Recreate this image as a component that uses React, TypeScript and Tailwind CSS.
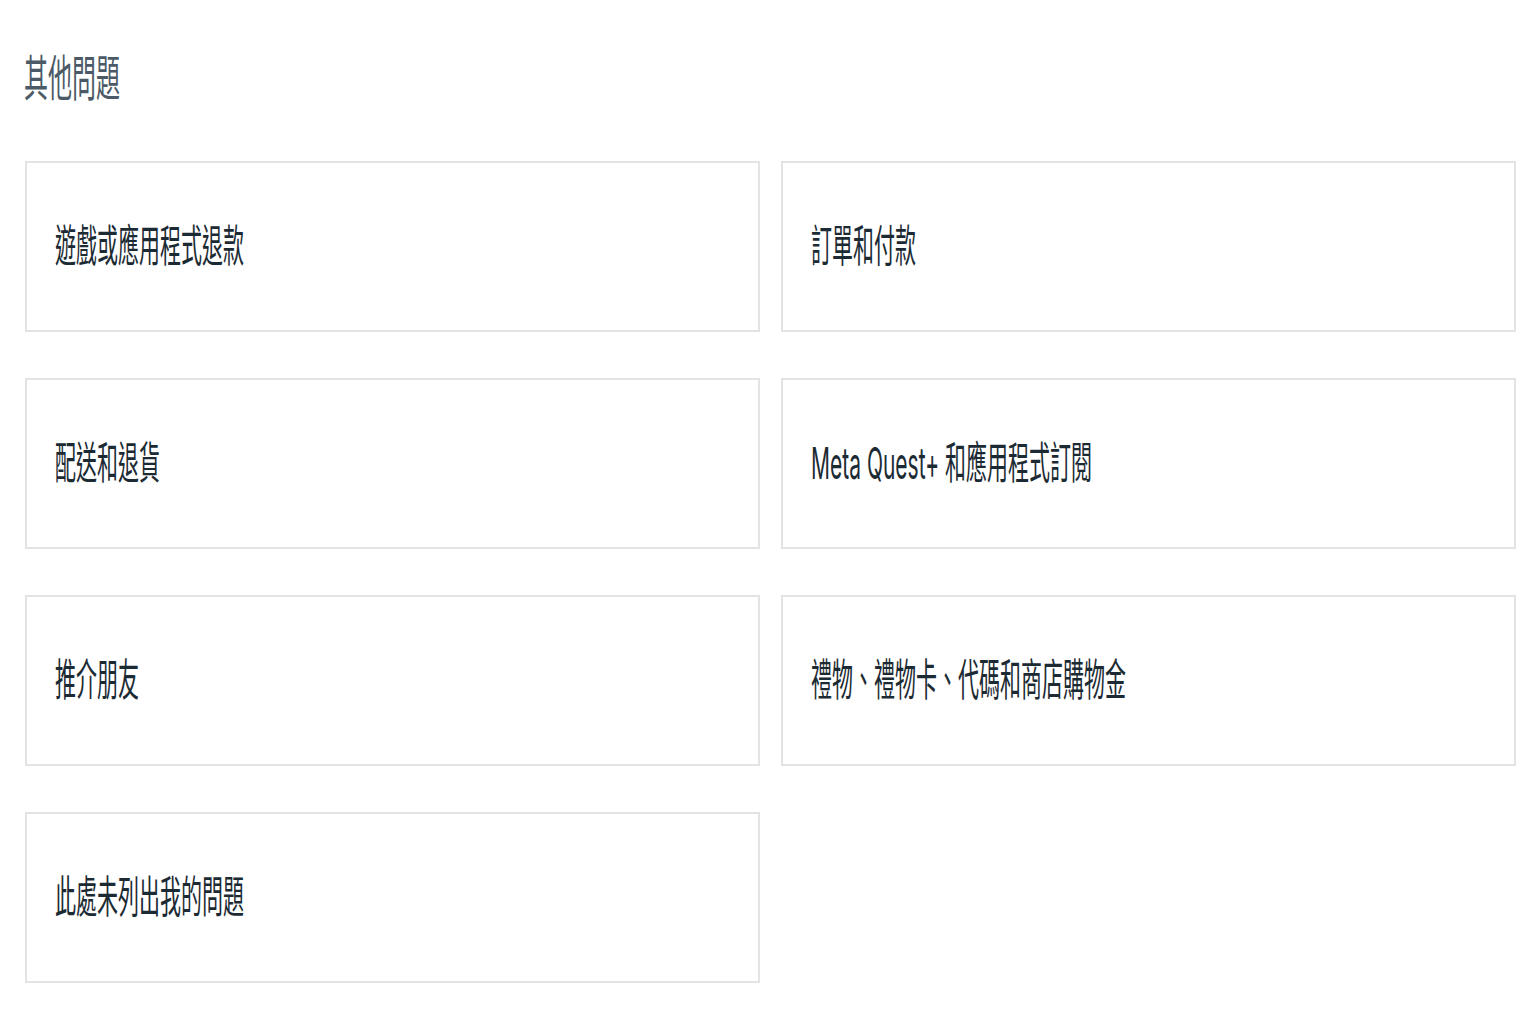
import React from "react";

const items = [
  "遊戲或應用程式退款",
  "訂單和付款",
  "配送和退貨",
  "Meta Quest+ 和應用程式訂閱",
  "推介朋友",
  "禮物、禮物卡、代碼和商店購物金",
  "此處未列出我的問題",
];

const font = {
  fontFamily: '"Inter", "Noto Sans CJK TC", "Noto Sans", sans-serif',
};

export default function App() {
  return (
    <div className="min-h-[1024px] w-[1536px] bg-white pl-[24px] pr-[20px] pt-[50px]" style={font}>
      <div className="flex h-[60px] items-center">
        <span className="inline-block origin-center scale-y-[2.05] text-[24px] leading-none text-[#4b5a66]">
          其他問題
        </span>
      </div>
      <div className="mt-[51px] grid grid-cols-2 gap-x-[21px] gap-y-[46px] pl-px">
        {items.map((t) => (
          <div
            key={t}
            className="flex h-[171px] items-center border-2 border-[#e3e3e3] bg-white pl-[28px]"
          >
            <span className="inline-block origin-center scale-y-[2.1] text-[21px] leading-none text-[#1c2b33]">
              {t}
            </span>
          </div>
        ))}
      </div>
    </div>
  );
}
